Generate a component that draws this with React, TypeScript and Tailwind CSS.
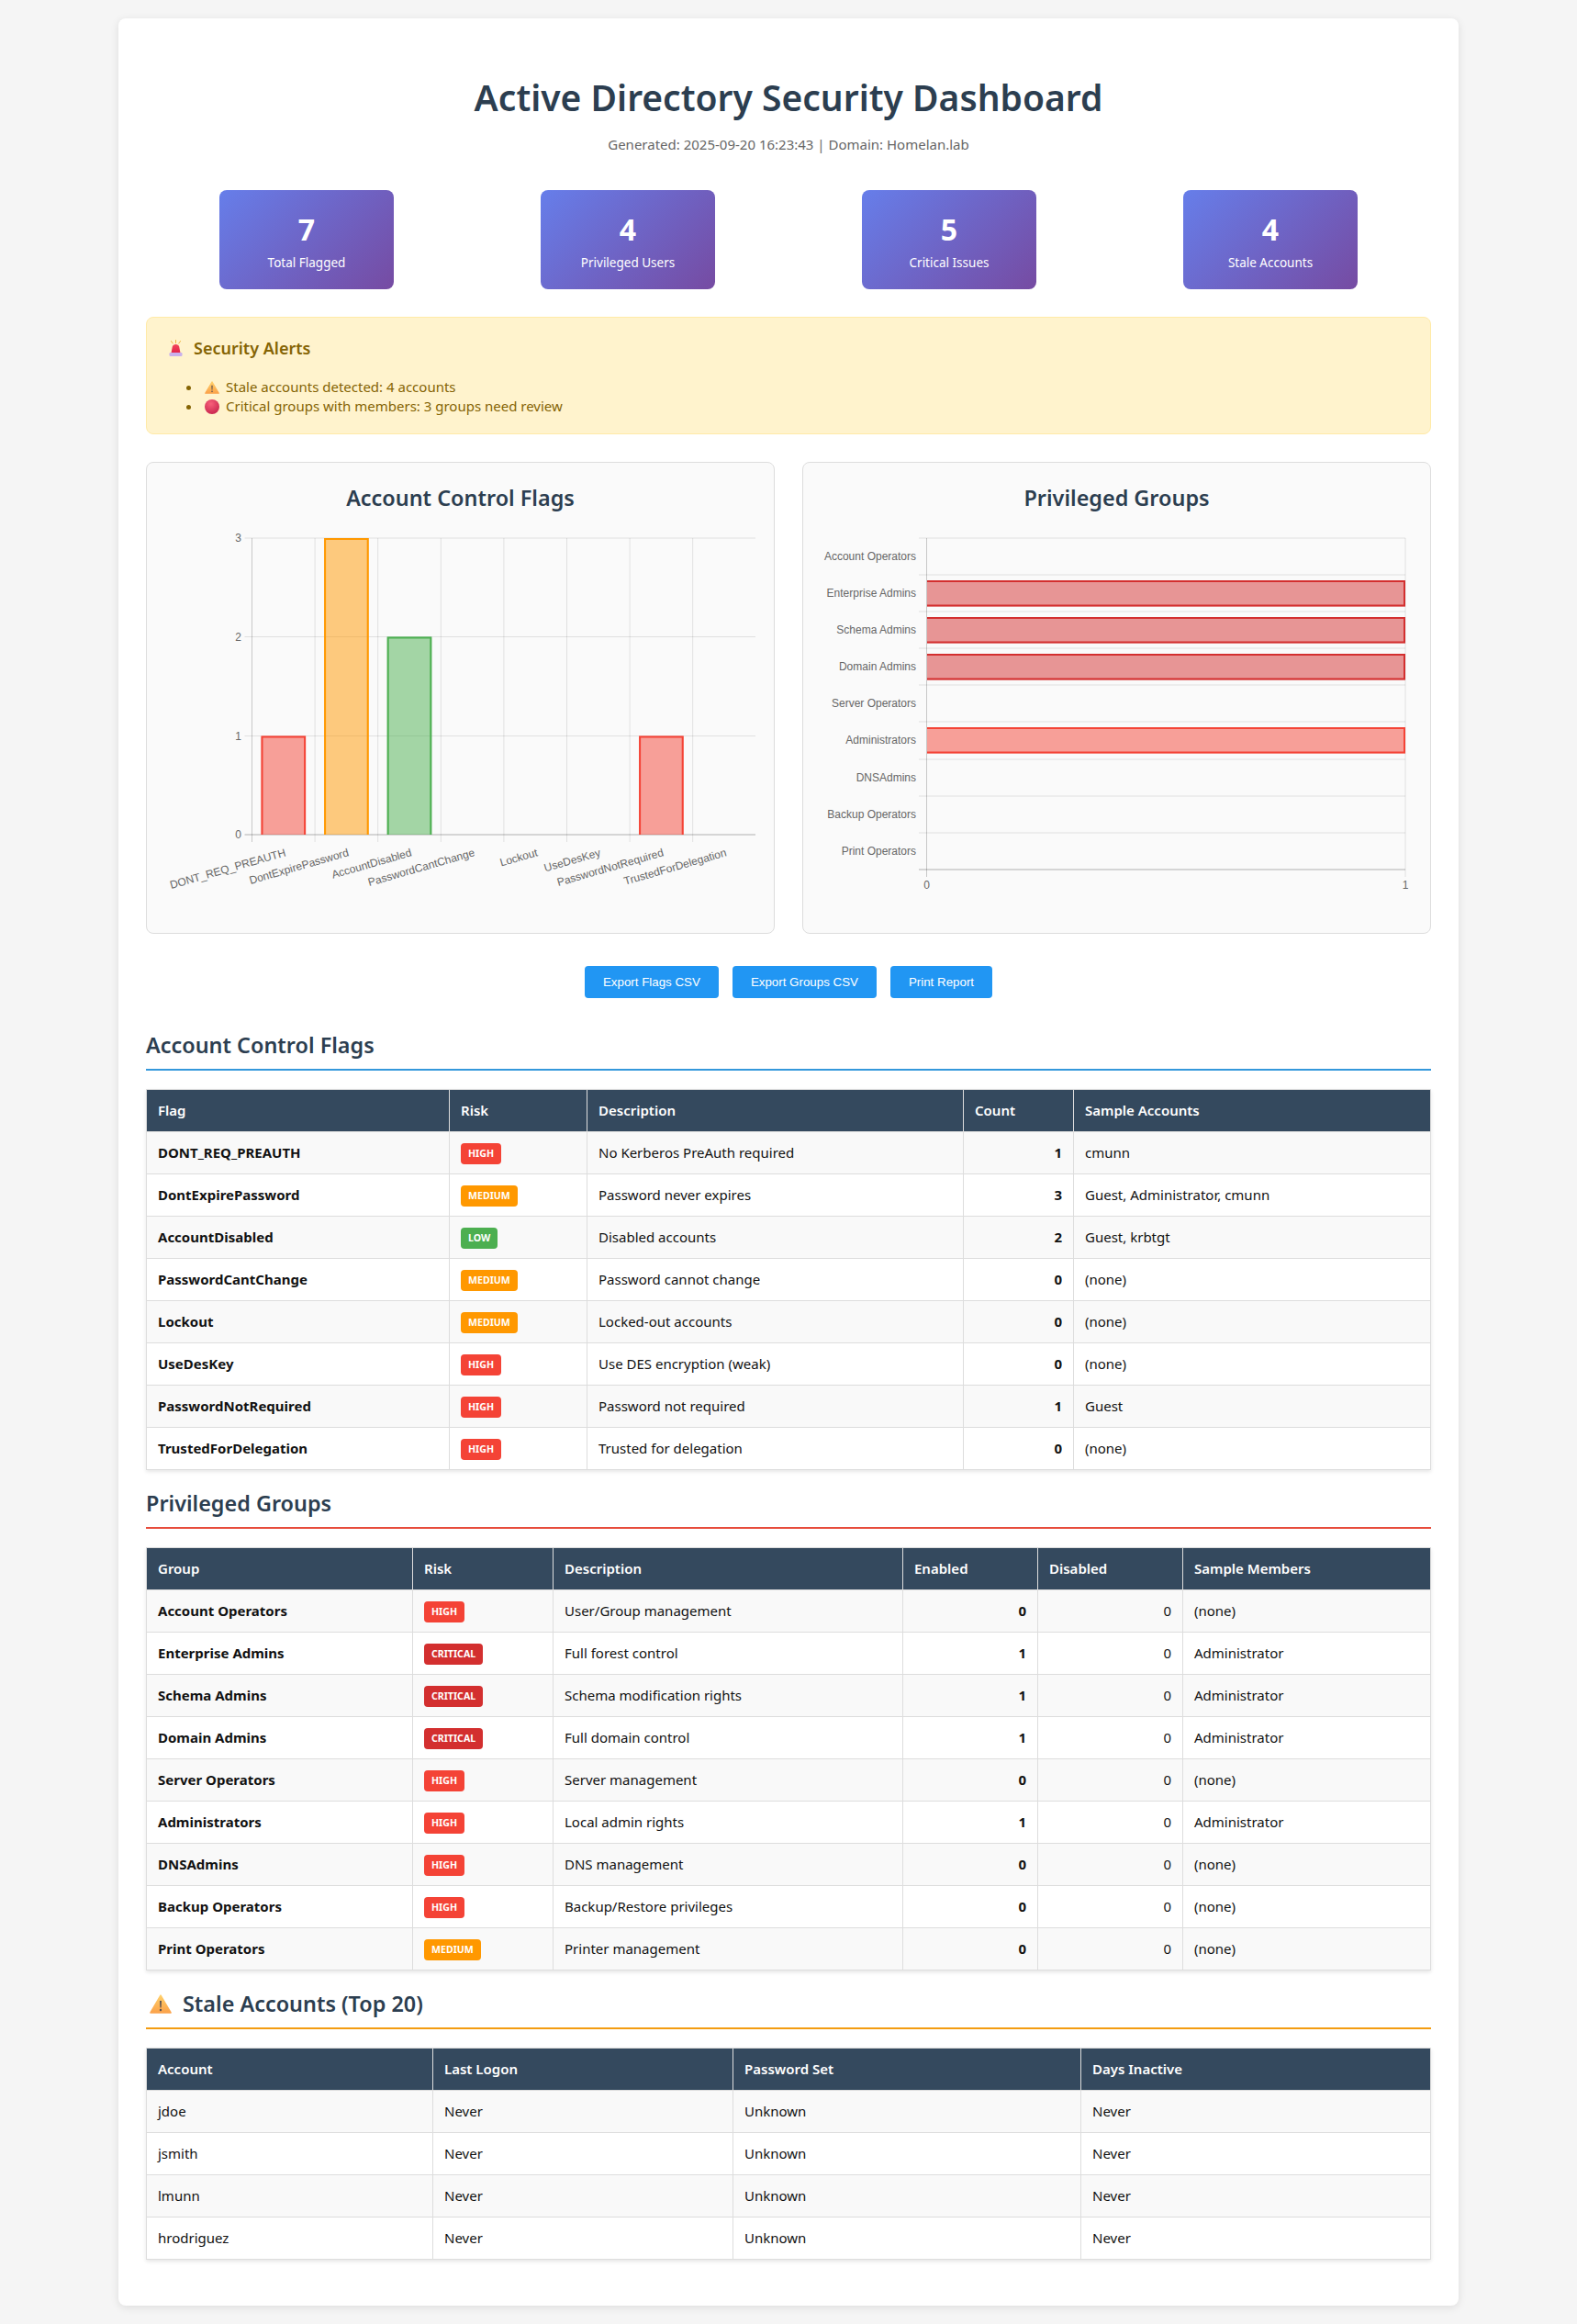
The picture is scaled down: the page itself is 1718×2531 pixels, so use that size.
const sans = "font-['Noto_Sans','Open_Sans',sans-serif]";

type Risk = "HIGH" | "MEDIUM" | "LOW" | "CRITICAL";

const riskColors: Record<Risk, string> = {
  HIGH: "bg-[#f44336]",
  MEDIUM: "bg-[#ff9800]",
  LOW: "bg-[#4caf50]",
  CRITICAL: "bg-[#d32f2f]",
};

const stats = [
  { value: 7, label: "Total Flagged" },
  { value: 4, label: "Privileged Users" },
  { value: 5, label: "Critical Issues" },
  { value: 4, label: "Stale Accounts" },
];

const flags: [string, Risk, string, number, string][] = [
  ["DONT_REQ_PREAUTH", "HIGH", "No Kerberos PreAuth required", 1, "cmunn"],
  ["DontExpirePassword", "MEDIUM", "Password never expires", 3, "Guest, Administrator, cmunn"],
  ["AccountDisabled", "LOW", "Disabled accounts", 2, "Guest, krbtgt"],
  ["PasswordCantChange", "MEDIUM", "Password cannot change", 0, "(none)"],
  ["Lockout", "MEDIUM", "Locked-out accounts", 0, "(none)"],
  ["UseDesKey", "HIGH", "Use DES encryption (weak)", 0, "(none)"],
  ["PasswordNotRequired", "HIGH", "Password not required", 1, "Guest"],
  ["TrustedForDelegation", "HIGH", "Trusted for delegation", 0, "(none)"],
];

const groups: [string, Risk, string, number, number, string][] = [
  ["Account Operators", "HIGH", "User/Group management", 0, 0, "(none)"],
  ["Enterprise Admins", "CRITICAL", "Full forest control", 1, 0, "Administrator"],
  ["Schema Admins", "CRITICAL", "Schema modification rights", 1, 0, "Administrator"],
  ["Domain Admins", "CRITICAL", "Full domain control", 1, 0, "Administrator"],
  ["Server Operators", "HIGH", "Server management", 0, 0, "(none)"],
  ["Administrators", "HIGH", "Local admin rights", 1, 0, "Administrator"],
  ["DNSAdmins", "HIGH", "DNS management", 0, 0, "(none)"],
  ["Backup Operators", "HIGH", "Backup/Restore privileges", 0, 0, "(none)"],
  ["Print Operators", "MEDIUM", "Printer management", 0, 0, "(none)"],
];

const stale = ["jdoe", "jsmith", "lmunn", "hrodriguez"];

const th = "border border-[#ddd] bg-[#34495e] px-3 text-left text-[15px] font-semibold text-white";
const td = "border border-[#ddd] px-3 text-[15px] text-[#111]";
const rowBg = (i: number) => (i % 2 === 0 ? "h-[46px] bg-[#f9f9f9]" : "h-[46px] bg-white");

function Badge({ risk }: { risk: Risk }) {
  return (
    <span className={`inline-block rounded px-2 py-1 align-middle text-[10.6px] leading-[15px] font-bold text-white ${riskColors[risk]}`}>
      {risk}
    </span>
  );
}

function WarnIcon({ w, h, id }: { w: number; h: number; id: string }) {
  return (
    <svg width={w} height={h} viewBox="0 0 24 21" className="inline-block shrink-0">
      <defs>
        <linearGradient id={id} x1="0" y1="0" x2="0" y2="1">
          <stop offset="0" stopColor="#ffcf6a" />
          <stop offset="1" stopColor="#fba24a" />
        </linearGradient>
      </defs>
      <path d="M12 1.2 L23 20 H1 Z" fill={`url(#${id})`} stroke={`url(#${id})`} strokeWidth="1.6" strokeLinejoin="round" />
      <path d="M11 7 H13 L12.6 14.5 H11.4 Z" fill="#5a5050" />
      <circle cx="12" cy="17" r="1.2" fill="#5a5050" />
    </svg>
  );
}

function RedDot() {
  return (
    <svg width="16" height="16" viewBox="0 0 16 16" className="inline-block shrink-0">
      <defs>
        <radialGradient id="dotFill" cx="0.42" cy="0.3" r="0.8">
          <stop offset="0" stopColor="#f7607a" />
          <stop offset="1" stopColor="#c4204a" />
        </radialGradient>
      </defs>
      <circle cx="8" cy="8" r="8" fill="url(#dotFill)" />
    </svg>
  );
}

function Siren() {
  return (
    <svg width="15" height="18" viewBox="0 0 15 18" className="inline-block shrink-0">
      <defs>
        <linearGradient id="sirenFill" x1="0" y1="0" x2="0" y2="1">
          <stop offset="0" stopColor="#f4465a" />
          <stop offset="1" stopColor="#e0234a" />
        </linearGradient>
      </defs>
      <path d="M7.5 0.5 V3.5 M2.5 1.5 L4.2 4 M12.5 1.5 L10.8 4" stroke="#f0b840" strokeWidth="1" strokeLinecap="round" />
      <path d="M2.5 14.5 L3.8 7.5 C4.4 4 10.6 4 11.2 7.5 L12.5 14.5 Z" fill="url(#sirenFill)" />
      <rect x="0.5" y="14" width="14" height="4" rx="1.2" fill="#c9b0ec" />
    </svg>
  );
}

function FlagsChart() {
  const xs = Array.from({ length: 9 }, (_, i) => 274.5 + i * 68.6);
  const labels = flags.map((f) => f[0]);
  const bars = [
    { i: 0, v: 1, fill: "rgba(244,67,54,0.5)", stroke: "#f44336" },
    { i: 1, v: 3, fill: "rgba(255,152,0,0.5)", stroke: "#ff9800" },
    { i: 2, v: 2, fill: "rgba(76,175,80,0.5)", stroke: "#4caf50" },
    { i: 6, v: 1, fill: "rgba(244,67,54,0.5)", stroke: "#f44336" },
  ];
  const ys = [909, 801.5, 693.5, 586];
  return (
    <svg width="643" height="420" viewBox="180 576 643 420" className="block">
      {ys.map((y) => (
        <line key={y} x1="266.5" x2="823" y1={y} y2={y} stroke="rgba(0,0,0,0.1)" />
      ))}
      {xs.slice(0, 8).map((x) => (
        <line key={x} x1={x} x2={x} y1="586" y2="917" stroke="rgba(0,0,0,0.1)" />
      ))}
      <line x1="274.5" x2="274.5" y1="586" y2="917" stroke="rgba(0,0,0,0.1)" />
      <line x1="266.5" x2="823" y1="909" y2="909" stroke="rgba(0,0,0,0.2)" />
      {bars.map((b) => {
        const x = 284.5 + b.i * 68.6;
        const top = ys[b.v];
        return (
          <g key={b.i}>
            <rect x={x} y={top} width="48.6" height={909 - top} fill={b.fill} />
            <path d={`M${x + 1} 909 V${top + 1} H${x + 47.6} V909`} fill="none" stroke={b.stroke} strokeWidth="2" />
          </g>
        );
      })}
      {[0, 1, 2, 3].map((v) => (
        <text key={v} x="263" y={ys[v] + 4} textAnchor="end" fontSize="12" fill="#666" fontFamily="Liberation Sans, sans-serif">
          {v}
        </text>
      ))}
      {labels.map((l, i) => (
        <text
          key={l}
          transform={`translate(${312 + i * 68.6} 932) rotate(-16)`}
          textAnchor="end"
          fontSize="12"
          fill="#666"
          fontFamily="Liberation Sans, sans-serif"
        >
          {l}
        </text>
      ))}
    </svg>
  );
}

function GroupsChart() {
  const rows = [586, 626, 666, 706, 746, 786, 827, 867, 907, 947];
  const filled: [number, string, string][] = [
    [1, "rgba(211,47,47,0.5)", "#d32f2f"],
    [2, "rgba(211,47,47,0.5)", "#d32f2f"],
    [3, "rgba(211,47,47,0.5)", "#d32f2f"],
    [5, "rgba(244,67,54,0.5)", "#f44336"],
  ];
  return (
    <svg width="643" height="420" viewBox="895 576 643 420" className="block">
      {rows.map((y) => (
        <line key={y} x1="1001" x2="1531" y1={y} y2={y} stroke="rgba(0,0,0,0.1)" />
      ))}
      <line x1="1009.5" x2="1009.5" y1="586" y2="955" stroke="rgba(0,0,0,0.2)" />
      <line x1="1531" x2="1531" y1="586" y2="955" stroke="rgba(0,0,0,0.1)" />
      <line x1="1001" x2="1531" y1="947" y2="947" stroke="rgba(0,0,0,0.2)" />
      {filled.map(([i, fill, stroke]) => {
        const top = rows[i] + 6;
        return (
          <g key={i}>
            <rect x="1010" y={top} width="521" height="28.5" fill={fill} />
            <path d={`M1010 ${top + 1} H1530 V${top + 27.5} H1010`} fill="none" stroke={stroke} strokeWidth="2" />
          </g>
        );
      })}
      {groups.map((g, i) => (
        <text
          key={g[0]}
          x="998"
          y={rows[i] + 24}
          textAnchor="end"
          fontSize="12"
          fill="#666"
          fontFamily="Liberation Sans, sans-serif"
        >
          {g[0]}
        </text>
      ))}
      <text x="1009.5" y="968" textAnchor="middle" fontSize="12" fill="#666" fontFamily="Liberation Sans, sans-serif">0</text>
      <text x="1531" y="968" textAnchor="middle" fontSize="12" fill="#666" fontFamily="Liberation Sans, sans-serif">1</text>
    </svg>
  );
}

function SectionTitle({ children, color }: { children: React.ReactNode; color: string }) {
  return (
    <h2 className={`mb-5 flex items-center border-b-2 pb-2.5 text-[23.4px] leading-8 font-semibold text-[#2c3e50] ${color}`}>
      {children}
    </h2>
  );
}

export default function App() {
  return (
    <div className={`min-h-[2531px] bg-[#f5f5f5] pt-5 ${sans}`}>
      <div className="mx-auto w-[1460px] rounded-lg bg-white p-[30px] shadow-[0_2px_10px_rgba(0,0,0,0.1)]">
        <h1 className="mt-[29px] text-center text-[39px] leading-[54px] font-semibold text-[#2c3e50]">
          Active Directory Security Dashboard
        </h1>
        <p className="mt-[14px] text-center text-[15px] leading-[21px] text-[#666]">
          Generated: 2025-09-20 16:23:43 | Domain: Homelan.lab
        </p>

        <div className="mt-[39px] grid grid-cols-4">
          {stats.map((s) => (
            <div
              key={s.label}
              className="mx-auto flex h-[108px] w-[190px] flex-col items-center rounded-lg bg-[linear-gradient(135deg,#667eea,#764ba2)] pt-5 text-white"
            >
              <div className="text-[32px] leading-[45px] font-bold">{s.value}</div>
              <div className="mt-[5px] text-[13.5px] leading-[18px]">{s.label}</div>
            </div>
          ))}
        </div>

        <div className="mt-[30px] h-[128px] rounded-lg border border-[#ffeaa7] bg-[#fff3cd] px-5 pt-5 text-[#856404]">
          <h3 className="flex items-center gap-3 pl-1 text-lg leading-[26px] font-semibold">
            <Siren />
            Security Alerts
          </h3>
          <ul className="mt-[19px] list-disc pl-10 text-[15px] leading-[21px]">
            <li>
              <span className="inline-flex items-center align-top">
                <span className="mr-[7px] ml-[3px] flex h-[21px] items-center">
                  <WarnIcon w={16} h={14} id="warnSmall" />
                </span>
                Stale accounts detected: 4 accounts
              </span>
            </li>
            <li>
              <span className="inline-flex items-center align-top">
                <span className="mr-[7px] ml-[3px] flex h-[21px] items-center">
                  <RedDot />
                </span>
                Critical groups with members: 3 groups need review
              </span>
            </li>
          </ul>
        </div>

        <div className="mt-[30px] grid grid-cols-2 gap-[30px]">
          <div className="h-[514px] rounded-lg border border-[#ddd] bg-[#fafafa] p-5">
            <h3 className="mt-[2px] mb-[18px] text-center text-[23.4px] leading-8 font-semibold text-[#2c3e50]">
              Account Control Flags
            </h3>
            <FlagsChart />
          </div>
          <div className="h-[514px] rounded-lg border border-[#ddd] bg-[#fafafa] p-5">
            <h3 className="mt-[2px] mb-[18px] text-center text-[23.4px] leading-8 font-semibold text-[#2c3e50]">
              Privileged Groups
            </h3>
            <GroupsChart />
          </div>
        </div>

        <div className="mt-[35px] flex justify-center gap-[15px] font-['Liberation_Sans',sans-serif]">
          {["Export Flags CSV", "Export Groups CSV", "Print Report"].map((b) => (
            <button key={b} className="h-[35px] rounded bg-[#2196f3] px-5 text-[13.33px] text-white">
              {b}
            </button>
          ))}
        </div>

        <div className="mt-[35px]">
          <SectionTitle color="border-[#3498db]">Account Control Flags</SectionTitle>
          <table className="mb-5 w-full table-fixed border-collapse shadow-[0_2px_4px_rgba(0,0,0,0.1)]">
            <colgroup>
              <col className="w-[330px]" />
              <col className="w-[150px]" />
              <col className="w-[410px]" />
              <col className="w-[120px]" />
              <col />
            </colgroup>
            <thead>
              <tr className="h-[46px]">
                {["Flag", "Risk", "Description", "Count", "Sample Accounts"].map((h) => (
                  <th key={h} className={th}>{h}</th>
                ))}
              </tr>
            </thead>
            <tbody>
              {flags.map((f, i) => (
                <tr key={f[0]} className={rowBg(i)}>
                  <td className={`${td} font-bold`}>{f[0]}</td>
                  <td className={td}><Badge risk={f[1]} /></td>
                  <td className={td}>{f[2]}</td>
                  <td className={`${td} text-right font-bold`}>{f[3]}</td>
                  <td className={td}>{f[4]}</td>
                </tr>
              ))}
            </tbody>
          </table>
        </div>

        <div>
          <SectionTitle color="border-[#e74c3c]">Privileged Groups</SectionTitle>
          <table className="mb-5 w-full table-fixed border-collapse shadow-[0_2px_4px_rgba(0,0,0,0.1)]">
            <colgroup>
              <col className="w-[290px]" />
              <col className="w-[153px]" />
              <col className="w-[381px]" />
              <col className="w-[147px]" />
              <col className="w-[158px]" />
              <col />
            </colgroup>
            <thead>
              <tr className="h-[46px]">
                {["Group", "Risk", "Description", "Enabled", "Disabled", "Sample Members"].map((h) => (
                  <th key={h} className={th}>{h}</th>
                ))}
              </tr>
            </thead>
            <tbody>
              {groups.map((g, i) => (
                <tr key={g[0]} className={rowBg(i)}>
                  <td className={`${td} font-bold`}>{g[0]}</td>
                  <td className={td}><Badge risk={g[1]} /></td>
                  <td className={td}>{g[2]}</td>
                  <td className={`${td} text-right font-bold`}>{g[3]}</td>
                  <td className={`${td} text-right`}>{g[4]}</td>
                  <td className={td}>{g[5]}</td>
                </tr>
              ))}
            </tbody>
          </table>
        </div>

        <div>
          <SectionTitle color="border-[#f39c12]">
            <span className="mr-3 ml-1 flex items-center">
              <WarnIcon w={24} h={21} id="warnLarge" />
            </span>
            Stale Accounts (Top 20)
          </SectionTitle>
          <table className="mb-5 w-full table-fixed border-collapse shadow-[0_2px_4px_rgba(0,0,0,0.1)]">
            <colgroup>
              <col className="w-[312px]" />
              <col className="w-[327px]" />
              <col className="w-[379px]" />
              <col />
            </colgroup>
            <thead>
              <tr className="h-[46px]">
                {["Account", "Last Logon", "Password Set", "Days Inactive"].map((h) => (
                  <th key={h} className={th}>{h}</th>
                ))}
              </tr>
            </thead>
            <tbody>
              {stale.map((a, i) => (
                <tr key={a} className={rowBg(i)}>
                  <td className={td}>{a}</td>
                  <td className={td}>Never</td>
                  <td className={td}>Unknown</td>
                  <td className={td}>Never</td>
                </tr>
              ))}
            </tbody>
          </table>
        </div>
      </div>
    </div>
  );
}
